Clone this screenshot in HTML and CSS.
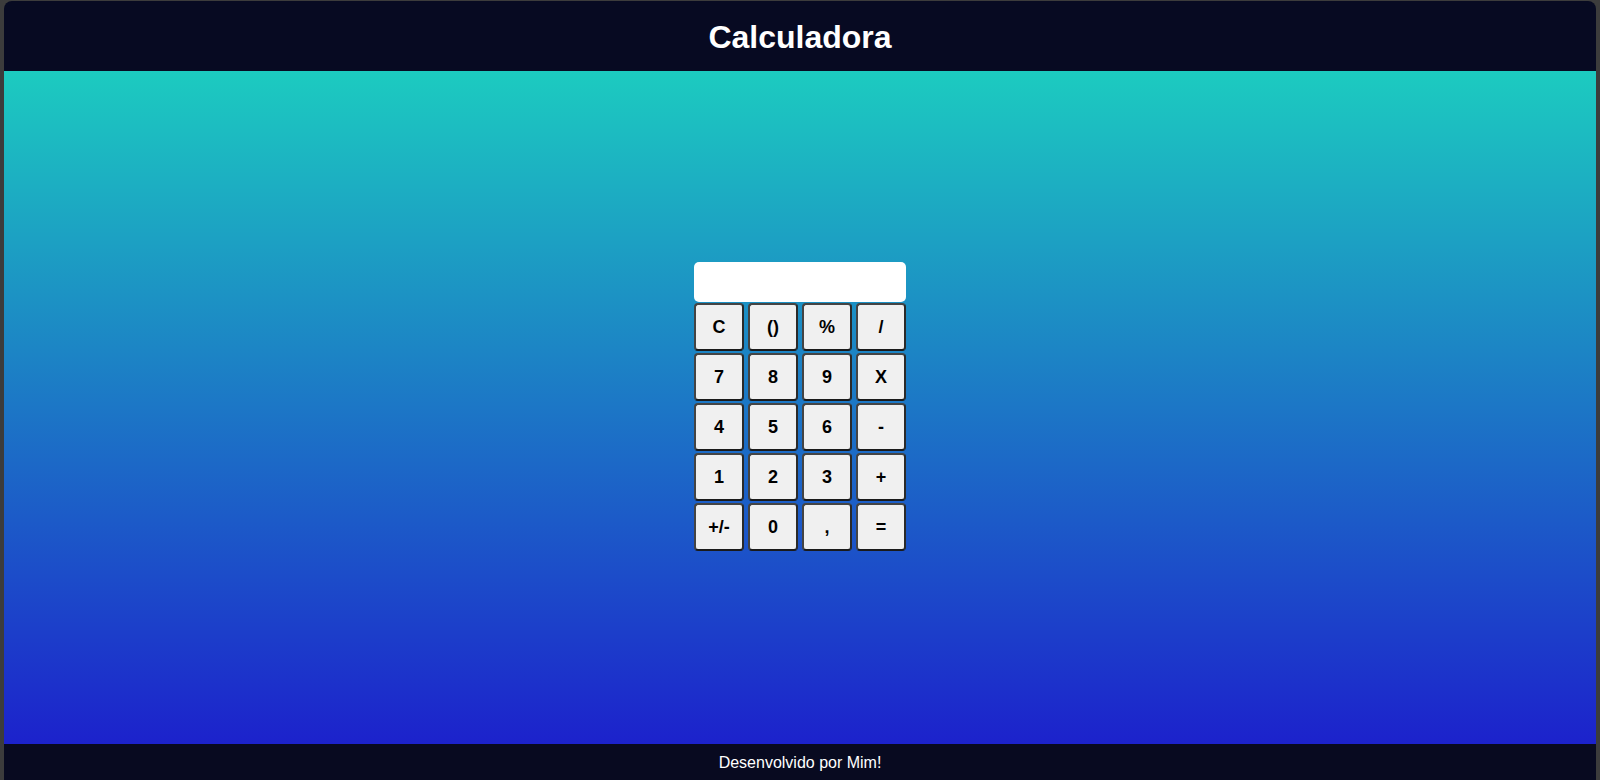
FILE: index.html
```html
<!DOCTYPE html>
<html lang="pt">
<head>
<meta charset="utf-8">
<title>Calculadora</title>
<link rel="stylesheet" href="styles.css">
</head>
<body>
<div class="app">
  <header class="topbar"><h1 class="title">Calculadora</h1></header>
  <main class="stage">
    <div class="calc">
      <div class="display"></div>
      <div class="keys">
        <button class="key">C</button>
        <button class="key">()</button>
        <button class="key">%</button>
        <button class="key">/</button>
        <button class="key">7</button>
        <button class="key">8</button>
        <button class="key">9</button>
        <button class="key">X</button>
        <button class="key">4</button>
        <button class="key">5</button>
        <button class="key">6</button>
        <button class="key">-</button>
        <button class="key">1</button>
        <button class="key">2</button>
        <button class="key">3</button>
        <button class="key">+</button>
        <button class="key">+/-</button>
        <button class="key">0</button>
        <button class="key">,</button>
        <button class="key">=</button>
      </div>
    </div>
  </main>
  <footer class="bottombar">Desenvolvido por Mim!</footer>
</div>
</body>
</html>
```
FILE: styles.css
```css
html, body {
  margin: 0;
  height: 100%;
}
body {
  background: #3c3c3c;
  padding: 1px 4px 0 4px;
  box-sizing: border-box;
  font-family: "Liberation Sans", Arial, sans-serif;
}
.app {
  height: 779px;
  display: flex;
  flex-direction: column;
  border-radius: 8px 8px 0 0;
  overflow: hidden;
}
.topbar {
  height: 70px;
  flex: 0 0 70px;
  background: #070a22;
  display: flex;
  align-items: center;
  justify-content: center;
}
.title {
  margin: 0;
  color: #ffffff;
  font-size: 32px;
  font-weight: bold;
  padding-top: 2px;
}
.stage {
  flex: 1;
  background: linear-gradient(to bottom, #1ccbc0 0%, #1c22cc 100%);
  display: flex;
  align-items: center;
  justify-content: center;
}
.calc {
  width: 212px;
  display: flex;
  flex-direction: column;
  margin-top: -3px;
}
.display {
  height: 40px;
  background: #ffffff;
  border-radius: 5px;
}
.keys {
  display: grid;
  grid-template-columns: repeat(4, 50px);
  grid-auto-rows: 48px;
  column-gap: 4px;
  row-gap: 2px;
  margin-top: 1px;
}
.key {
  box-sizing: border-box;
  width: 50px;
  height: 48px;
  margin: 0;
  padding: 2px 0 0 0;
  background: #f0f0f0;
  border: 2px solid #444444;
  border-bottom-color: #1a1a1a;
  border-right-color: #2a2a2a;
  border-radius: 4px;
  font-family: "Liberation Sans", Arial, sans-serif;
  font-size: 18px;
  font-weight: bold;
  color: #000000;
}
.bottombar {
  height: 36px;
  flex: 0 0 36px;
  box-sizing: border-box;
  padding-top: 1px;
  background: #080a20;
  color: #ffffff;
  font-size: 16px;
  display: flex;
  align-items: center;
  justify-content: center;
}
```
